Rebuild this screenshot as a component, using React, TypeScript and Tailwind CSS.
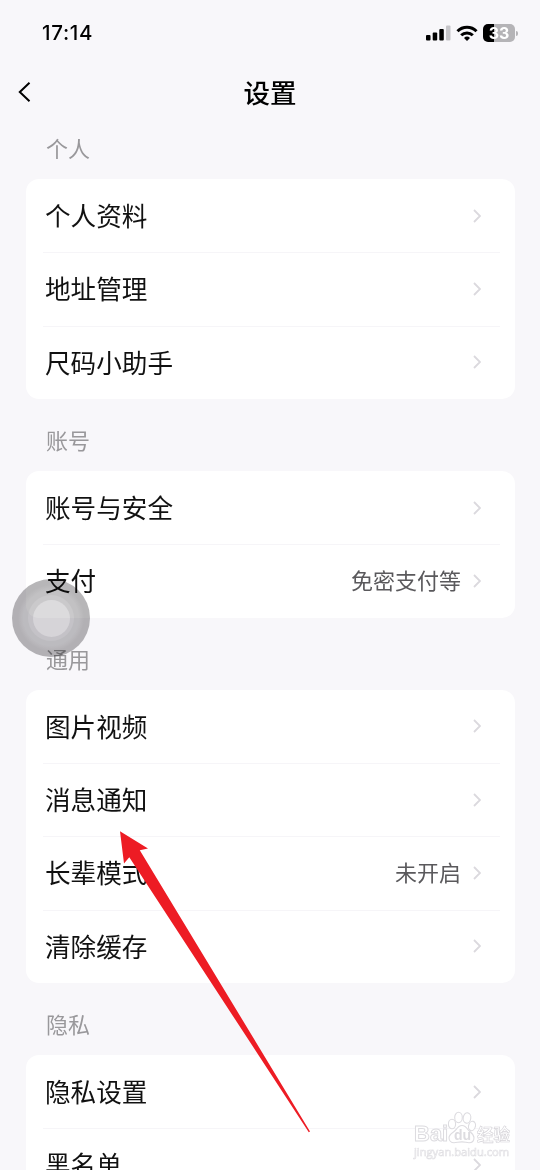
type Item = { label: string; value?: string };

const sections: { title: string; items: Item[] }[] = [
  { title: "个人", items: [{ label: "个人资料" }, { label: "地址管理" }, { label: "尺码小助手" }] },
  { title: "账号", items: [{ label: "账号与安全" }, { label: "支付", value: "免密支付等" }] },
  {
    title: "通用",
    items: [
      { label: "图片视频" },
      { label: "消息通知" },
      { label: "长辈模式", value: "未开启" },
      { label: "清除缓存" },
    ],
  },
  { title: "隐私", items: [{ label: "隐私设置" }, { label: "黑名单" }] },
];

function StatusBar() {
  return (
    <div className="flex h-[66px] items-center justify-between pl-[42px] pr-[22px]">
      <span className="font-['Inter','Noto_Sans_CJK_SC',sans-serif] text-[20.5px] font-medium tracking-[0.7px]">17:14</span>
      <div className="flex items-center">
        <svg width="25" height="16" viewBox="0 0 25 16">
          <rect x="0" y="10" width="4.5" height="5.5" rx="1" />
          <rect x="6.7" y="7.5" width="4.5" height="8" rx="1" />
          <rect x="13.3" y="4" width="4.5" height="11.5" rx="1" />
          <rect x="20" y="0.5" width="4.5" height="15" rx="1" fill="#c6c5c9" />
        </svg>
        <svg className="ml-[5px]" width="22" height="16" viewBox="0 0 22 16" fill="none" stroke="#000" strokeWidth="3">
          <path d="M1.5 6.2a13.4 13.4 0 0 1 19 0" />
          <path d="M5.2 10.3a8.2 8.2 0 0 1 11.6 0" />
          <path d="M8 12.9a4.3 4.3 0 0 1 6 0L11 16z" fill="#000" stroke="none" />
        </svg>
        <div className="ml-[5px] flex h-[18px] w-[32px] items-center justify-center rounded-[5px] bg-[linear-gradient(90deg,#000_34%,#b5b4b7_34%)]">
          <span className="font-['Inter',sans-serif] text-[16px] font-bold leading-none text-white">33</span>
        </div>
        <div className="ml-px h-[5px] w-[2px] rounded-r-full bg-[#b5b4b7]" />
      </div>
    </div>
  );
}

function Row({ item, last }: { item: Item; last: boolean }) {
  return (
    <div className="flex h-[73.35px] flex-col">
      <div className="flex flex-1 items-center pl-[19px] pr-[33px]">
        <span className="flex-1 pb-[2px] text-[25.6px] leading-none text-[#111]">{item.label}</span>
        {item.value && (
          <span className="mr-[12px] pb-[4px] text-[22px] leading-none text-[#5a595c]">{item.value}</span>
        )}
        <svg className="mr-px" width="8" height="14" viewBox="0 0 8 14" fill="none" stroke="#dbd9de" strokeWidth="1.8">
          <path d="M1 1l6 6-6 6" />
        </svg>
      </div>
      {!last && <div className="-mb-px ml-[17px] mr-[15px] h-px bg-[#f6f5f8]" />}
    </div>
  );
}

function Watermark() {
  return (
    <div className="absolute left-[414px] top-[1112px] w-[100px] font-['Liberation_Sans','Noto_Sans_CJK_SC',sans-serif] text-white">
      <div className="flex h-[32px] items-end whitespace-nowrap">
        <span className="w-[34px] text-[22px] font-bold leading-[20px] [-webkit-text-stroke:1px_#dddce0]">Bai</span>
        <svg width="28" height="33" viewBox="0 0 28 33" fill="#fff" stroke="#dddce0" strokeWidth="1.1">
          <ellipse cx="4" cy="13" rx="3.6" ry="4.8" />
          <ellipse cx="10.5" cy="6.5" rx="3.8" ry="5.2" />
          <ellipse cx="19" cy="7" rx="3.8" ry="5.2" transform="rotate(8 19 7)" />
          <ellipse cx="24" cy="15" rx="3.4" ry="4.8" transform="rotate(15 24 15)" />
          <path d="M14 14.5c-3 0-4.500 2-6 4.200-2 2.600-7 4.100-7 8 0 3 2.200 5 5 5 2.500 0 5-.8 8-.8s4.500.8 7 .8c3 0 5-2 5-5 0-3.900-4-5.400-6-8-1.500-2.200-3-4.200-6-4.200z" />
          <text x="6" y="29" fontSize="14" fontWeight="bold" fill="#dddce0" stroke="none">du</text>
        </svg>
        <span className="ml-px text-[16.5px] font-bold leading-[18px] [-webkit-text-stroke:0.6px_#d5d3d8]">经验</span>
      </div>
      <div className="font-['Open_Sans',sans-serif] text-[11.2px] leading-[15px] [-webkit-text-stroke:0.6px_#e0dfe3]">jingyan.baidu.com</div>
    </div>
  );
}

export default function App() {
  return (
    <div className="relative h-[1170px] w-[540px] overflow-hidden bg-[#f8f7fa] font-['Noto_Sans_CJK_SC',sans-serif] text-black">
      <StatusBar />

      {/* Title bar */}
      <div className="grid h-[41px] grid-cols-[60px_1fr_60px] items-center pt-[11px]">
        <svg className="ml-[18px]" width="13" height="20" viewBox="0 0 13 20" fill="none" stroke="#000" strokeWidth="2">
          <path d="M11.5 .8L1.8 10l9.7 9.2" />
        </svg>
        <h1 className="text-center text-[26.5px] font-medium leading-none">设置</h1>
      </div>

      {sections.map((section) => (
        <section key={section.title} className="px-[26px]">
          <h2 className="flex h-[72px] items-center pl-[20px] pt-[8px] text-[22px] leading-none text-[#99989b]">
            {section.title}
          </h2>
          <div className="mr-[-1px] rounded-[13px] bg-white">
            {section.items.map((item, i) => (
              <Row key={item.label} item={item} last={i === section.items.length - 1} />
            ))}
          </div>
        </section>
      ))}

      {/* Floating assistive button */}
      <div className="absolute left-[12px] top-[579px] flex size-[78px] items-center justify-center rounded-full bg-[radial-gradient(circle,#c2c1c3_50%,#b7b6b8_60%)] mix-blend-multiply">
        <div className="flex size-[46px] items-center justify-center rounded-full bg-[#cac9cb]">
          <div className="size-[37px] rounded-full bg-[#dcdbdd]" />
        </div>
      </div>

      <Watermark />

      {/* Pointer */}
      <svg className="absolute left-[110px] top-[820px]" width="210" height="320" viewBox="110 820 210 320">
        <path d="M120 831.3L148 848.5l-8.200 1.800L310 1131.500l-1.200.7L129.300 857.300l-5.300 6.200z" fill="#ed1c24" />
      </svg>
    </div>
  );
}
